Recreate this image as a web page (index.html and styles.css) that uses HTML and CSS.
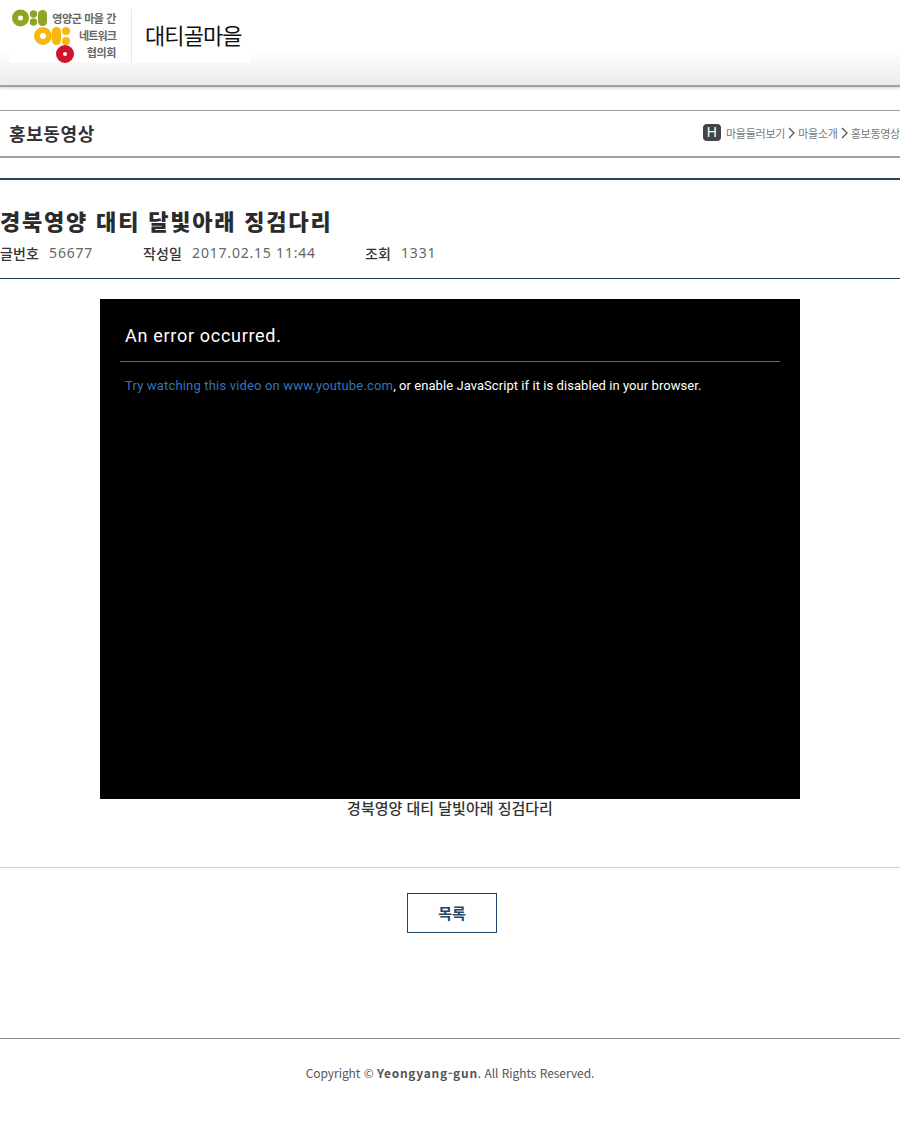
FILE: index.html
```html
<!DOCTYPE html>
<html lang="ko">
<head>
<meta charset="utf-8">
<title>홍보동영상</title>
<link rel="stylesheet" href="styles.css">
</head>
<body>
<header class="top">
  <div class="brand">
    <div class="logo">
      <svg class="logo-mark" width="92" height="54" viewBox="0 0 92 54">
        <g fill="#8ea526">
          <path fill-rule="evenodd" d="M1 9a8.500 8.500 0 1 1 17 0a8.500 8.500 0 1 1 -17 0zM7 9a2.500 2.500 0 1 0 5 0a2.500 2.500 0 1 0 -5 0z"/>
          <circle cx="22.500" cy="5" r="3.700"/><circle cx="22.500" cy="13" r="3.700"/>
          <rect x="27" y="1" width="9" height="16" rx="4.500"/>
        </g>
        <g fill="#f6b90f">
          <path fill-rule="evenodd" d="M23 27a9 9 0 1 1 18 0a9 9 0 1 1 -18 0zM29 27a3 3 0 1 0 6 0a3 3 0 1 0 -6 0z"/>
          <rect x="41" y="18" width="9" height="18" rx="4.500"/>
          <circle cx="55" cy="22" r="4"/><circle cx="55" cy="32" r="4"/>
        </g>
        <path fill="#d2122f" fill-rule="evenodd" d="M45 45a9 9 0 1 1 18 0a9 9 0 1 1 -18 0zM52 45a2 2 0 1 0 4 0a2 2 0 1 0 -4 0z"/>
      </svg>
      <div class="logo-text">
        <span class="logo-line">영양군 마을 간</span>
        <span class="logo-line logo-tight">네트워크</span>
        <span class="logo-line">협의회</span>
      </div>
    </div>
    <div class="village">대티골마을</div>
  </div>
</header>

<section class="page-head">
  <h2 class="page-title">홍보동영상</h2>
  <nav class="crumbs">
    <span class="home">H</span>
    <span>마을둘러보기</span>
    <svg class="chev" width="7" height="12" viewBox="0 0 7 12"><path d="M1 1l5 5-5 5" fill="none" stroke="#555" stroke-width="1.300"/></svg>
    <span>마을소개</span>
    <svg class="chev" width="7" height="12" viewBox="0 0 7 12"><path d="M1 1l5 5-5 5" fill="none" stroke="#555" stroke-width="1.300"/></svg>
    <span>홍보동영상</span>
  </nav>
</section>

<main class="post">
  <div class="post-head">
    <h1 class="post-title">경북영양 대티 달빛아래 징검다리</h1>
    <div class="meta">
      <span class="meta-item m1"><b>글번호</b><i>56677</i></span>
      <span class="meta-item m2"><b>작성일</b><i>2017.02.15 11:44</i></span>
      <span class="meta-item"><b>조회</b><i>1331</i></span>
    </div>
  </div>
  <div class="body">
    <div class="player">
      <div class="err-title">An error occurred.</div>
      <div class="err-text"><a href="#">Try watching this video on www.youtube.com</a>, or enable JavaScript if it is disabled in your browser.</div>
    </div>
    <p class="caption">경북영양 대티 달빛아래 징검다리</p>
  </div>
  <div class="actions"><a class="btn" href="#">목록</a></div>
</main>

<footer class="foot">Copyright © <b>Yeongyang-gun</b>. All Rights Reserved.</footer>
</body>
</html>
```

FILE: styles.css
```css
* { box-sizing: border-box; }
html, body { margin: 0; padding: 0; }
body {
  background: #fff;
  color: #333;
  font-family: "Noto Sans CJK KR", "Noto Sans", sans-serif;
  height: 1139px;
  overflow: hidden;
}
.top {
  height: 87px;
  background: linear-gradient(#fff 0, #fff 50px, #f6f6f6 66px, #ececec 84px);
  border-bottom: 2px solid #a3a3a3;
  padding: 9px 0 0 9px;
  box-shadow: 0 1px 3px #ccc;
}
.brand { display: flex; width: 241px; height: 54px; background: #fff; }
.logo { display: flex; width: 123px; border-right: 1px solid #e8e8e8; position: relative; }
.logo-mark { margin-left: 2px; flex: none; }
.logo-text {
  position: absolute; right: 15px; top: 3px;
  display: flex; flex-direction: column; align-items: flex-end;
  gap: 5px;
}
.logo-line { font-size: 11px; line-height: 12px; font-weight: 700; color: #666; letter-spacing: -0.4px; white-space: nowrap; }
.logo-tight { letter-spacing: -0.9px; }
.village { font-size: 22px; line-height: 50px; color: #111; padding-left: 13px; letter-spacing: -0.9px; }

.page-head {
  margin-top: 23px;
  height: 48px;
  border-top: 1px solid #a5a29b;
  border-bottom: 2px solid #a5a29b;
  display: flex; align-items: center; justify-content: space-between;
  padding: 0 0 2px 9px;
}
.page-title { margin: 0; font-size: 18px; font-weight: 700; color: #333; letter-spacing: 0.6px; }
.crumbs { display: flex; align-items: center; gap: 3px; font-size: 11px; color: #777; letter-spacing: -0.25px; }
.home {
  width: 18px; height: 17px; background: #444; border-radius: 4px; color: #fff;
  font-size: 14px; line-height: 17px; text-align: center; margin-right: 2px; font-family: "Liberation Sans", sans-serif;
  letter-spacing: 0;
}
.chev { flex: none; }

.post { margin-top: 20px; border-top: 2px solid #1f4568; }
.post-head { height: 99px; border-bottom: 1px solid #1f3a52; padding-top: 24px; }
.post-title { margin: 0; font-size: 22px; line-height: 32px; font-weight: 900; color: #2b2b2b; letter-spacing: 1.800px; }
.meta { display: flex; margin-top: 6px; font-size: 14px; line-height: 22px; }
.meta-item { display: flex; gap: 10px; }
.m1 { width: 143px; }
.m2 { width: 222px; }
.meta b { font-weight: 500; color: #333; letter-spacing: 0.15px; }
.meta i { font-style: normal; color: #666; letter-spacing: 0.8px; font-family: "Noto Sans", sans-serif; }

.body { padding-top: 20px; height: 589px; border-bottom: 1px solid #d4d4d4; text-align: center; }
.player { width: 700px; height: 500px; margin: 0 auto; background: #000; color: #fff; padding: 0 20px; text-align: left; font-family: Roboto, sans-serif; }
.err-title { font-size: 18px; line-height: 24px; padding: 25px 5px 13px; border-bottom: 1px solid #666; height: 63px; letter-spacing: 0.7px; }
.err-text { font-size: 13px; line-height: 18px; padding: 15px 5px 0; letter-spacing: 0.06px; }
.err-text a { color: #3574b5; text-decoration: none; letter-spacing: 0.17px; }
.caption { margin: 0; font-size: 15px; line-height: 18px; font-weight: 500; color: #333; }

.actions { display: flex; justify-content: center; padding: 25px 0 0 4px; height: 171px; border-bottom: 1px solid #8e8e8e; }
.btn {
  width: 90px; height: 40px; border: 1px solid #1f4568; color: #1f4568;
  font-size: 15px; font-weight: 700; text-align: center; line-height: 38px; text-decoration: none;
}
.foot { text-align: center; font-size: 12px; line-height: 18px; color: #555; padding-top: 25px; letter-spacing: -0.05px; }
.foot b { letter-spacing: 0.750px; font-weight: 700; }
```
